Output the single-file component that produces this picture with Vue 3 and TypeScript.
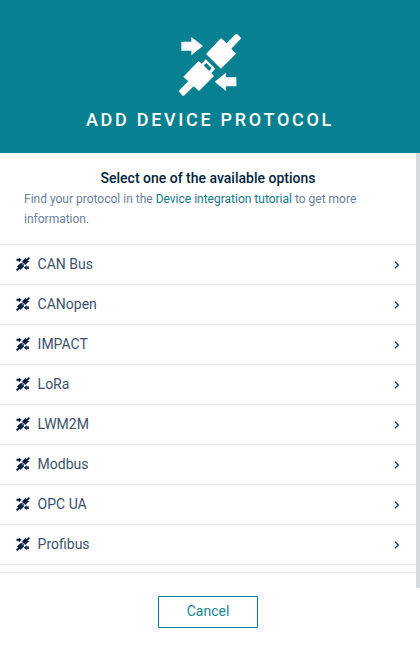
<script setup lang="ts">
const protocols: string[] = [
  'CAN Bus',
  'CANopen',
  'IMPACT',
  'LoRa',
  'LWM2M',
  'Modbus',
  'OPC UA',
  'Profibus',
]

const arrows =
  'M34 50H64V36L99 63L64 91V77H34Z M199 157H168V143L134 170L168 198V184H199Z'
const plugs =
  'M108 87L151 41L154 40L170 55L196 28L201 27L213 38L212 42L184 71L198 86L153 131Z ' +
  'M40 155L86 108L95 116L107 103L136 131L124 144L132 153L87 198L71 184L42 212L38 212L27 200L28 196L55 169Z ' +
  'M101 121L117 138L125 130L109 114Z'
</script>

<template>
  <div class="dialog">
    <header class="header">
      <svg class="logo" viewBox="24 24 192 192" aria-hidden="true">
        <path fill-rule="evenodd" :d="arrows" />
        <path fill-rule="evenodd" :d="plugs" />
      </svg>
      <h1 class="title">Add device protocol</h1>
    </header>

    <main class="body">
      <div class="content">
        <section class="intro">
          <h2 class="subtitle">Select one of the available options</h2>
          <p class="hint">
            Find your protocol in the <a class="link">Device integration tutorial</a> to get more
            information.
          </p>
        </section>
        <ul class="list">
          <li v-for="name in protocols" :key="name" class="item">
            <svg class="icon" viewBox="24 24 192 192" aria-hidden="true">
              <path fill-rule="evenodd" :d="arrows" />
              <path fill-rule="evenodd" :d="plugs" />
            </svg>
            <span class="name">{{ name }}</span>
            <svg class="chevron" viewBox="0 0 6 8" aria-hidden="true">
              <path d="M1 0.8L4.3 4L1 7.2" />
            </svg>
          </li>
        </ul>
      </div>
      <div class="scrollbar"></div>
    </main>

    <footer class="footer">
      <button class="cancel" type="button">Cancel</button>
    </footer>
  </div>
</template>

<style>
body {
  background: #fff;
}
</style>

<style scoped>
.dialog {
  display: flex;
  flex-direction: column;
  width: 420px;
  height: 652px;
  overflow: hidden;
  background: #fff;
  color: #001f3d;
  font-family: Roboto, sans-serif;
  font-size: 14px;
}
.header {
  display: flex;
  flex-direction: column;
  align-items: center;
  box-sizing: border-box;
  height: 153px;
  padding-top: 33px;
  background: #078191;
  color: #fff;
}
.logo {
  width: 64px;
  height: 64px;
  fill: #fff;
}
.title {
  margin: 11px 0 0;
  font-size: 18px;
  font-weight: 500;
  line-height: 24px;
  letter-spacing: 2.7px;
  text-transform: uppercase;
  white-space: nowrap;
}
.body {
  display: flex;
  height: 435px;
}
.content {
  width: 416px;
}
.scrollbar {
  width: 4px;
  border-radius: 0 0 1px 1px;
  background: #d5dade;
}
.intro {
  box-sizing: border-box;
  height: 91px;
  padding: 15px 24px 0;
}
.subtitle {
  margin: 0;
  font-size: 14px;
  font-weight: 500;
  line-height: 20px;
  text-align: center;
}
.hint {
  margin: 1px 0 0;
  color: #69809a;
  font-size: 12px;
  line-height: 20px;
}
.link {
  color: #14798a;
}
.list {
  margin: 0;
  padding: 0 0 7px;
  border-top: 1px solid #dfe2e6;
  border-bottom: 1px solid #dfe2e6;
  list-style: none;
}
.item {
  display: flex;
  align-items: center;
  box-sizing: border-box;
  height: 40px;
  padding: 0 16px;
  border-bottom: 1px solid #dfe2e6;
}
.icon {
  width: 14px;
  height: 14px;
  margin: 0 7.6px 2px 0;
  fill: #001f3d;
  stroke: #001f3d;
  stroke-width: 5;
}
.name {
  flex: 1;
  margin-bottom: 1px;
  color: #3b526a;
  line-height: 20px;
}
.chevron {
  width: 6px;
  height: 8px;
  margin-top: 1px;
  fill: none;
  stroke: #243c56;
  stroke-width: 1.4;
}
.footer {
  display: flex;
  justify-content: center;
  padding: 8px 4px 0 0;
}
.cancel {
  box-sizing: border-box;
  width: 100px;
  height: 32px;
  padding: 0 0 2px;
  border: 1px solid #078191;
  background: #fff;
  color: #1b8795;
  font: 400 14px/20px Roboto, sans-serif;
}
</style>
